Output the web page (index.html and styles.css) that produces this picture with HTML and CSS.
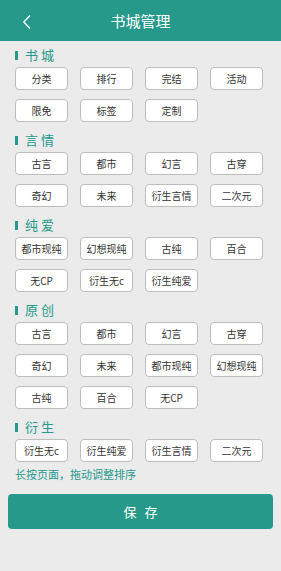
FILE: index.html
```html
<!DOCTYPE html>
<html lang="zh">
<head>
  <meta charset="UTF-8" />
  <title>书城管理</title>
  <link rel="stylesheet" href="styles.css">
</head>
<body>
  <div class="header">
    <span class="back">
      <svg width="10" height="16" viewBox="0 0 10 16"><path d="M8 1.5 L1.8 8 L8 14.5" fill="none" stroke="#fff" stroke-width="1.3"/></svg>
    </span>
    <h1>书城管理</h1>
  </div>
  <div class="container">
    <div class="section">
      <div class="section-title">书城</div>
      <div class="tags">
        <span class="tag">分类</span>
        <span class="tag">排行</span>
        <span class="tag">完结</span>
        <span class="tag">活动</span>
        <span class="tag">限免</span>
        <span class="tag">标签</span>
        <span class="tag">定制</span>
      </div>
    </div>
    <div class="section">
      <div class="section-title">言情</div>
      <div class="tags">
        <span class="tag">古言</span>
        <span class="tag">都市</span>
        <span class="tag">幻言</span>
        <span class="tag">古穿</span>
        <span class="tag">奇幻</span>
        <span class="tag">未来</span>
        <span class="tag">衍生言情</span>
        <span class="tag">二次元</span>
      </div>
    </div>
    <div class="section">
      <div class="section-title">纯爱</div>
      <div class="tags">
        <span class="tag">都市现纯</span>
        <span class="tag">幻想现纯</span>
        <span class="tag">古纯</span>
        <span class="tag">百合</span>
        <span class="tag">无CP</span>
        <span class="tag">衍生无c</span>
        <span class="tag">衍生纯爱</span>
      </div>
    </div>
    <div class="section">
      <div class="section-title">原创</div>
      <div class="tags">
        <span class="tag">古言</span>
        <span class="tag">都市</span>
        <span class="tag">幻言</span>
        <span class="tag">古穿</span>
        <span class="tag">奇幻</span>
        <span class="tag">未来</span>
        <span class="tag">都市现纯</span>
        <span class="tag">幻想现纯</span>
        <span class="tag">古纯</span>
        <span class="tag">百合</span>
        <span class="tag">无CP</span>
      </div>
    </div>
    <div class="section">
      <div class="section-title">衍生</div>
      <div class="tags">
        <span class="tag">衍生无c</span>
        <span class="tag">衍生纯爱</span>
        <span class="tag">衍生言情</span>
        <span class="tag">二次元</span>
      </div>
    </div>
    <div class="hint">长按页面，拖动调整排序</div>
  </div>
  <button class="save">保存</button>
</body>
</html>
```

FILE: styles.css
```css
body {
  font-family: "Noto Sans CJK SC", "Noto Sans", sans-serif;
  background: #ebebeb;
  margin: 0;
  padding: 0;
  color: #333;
}
.header {
  height: 41px;
  background: #26998b;
  display: flex;
  align-items: center;
  justify-content: center;
  position: relative;
}
.header h1 {
  margin: 0;
  font-size: 15px;
  font-weight: normal;
  color: #fff;
  letter-spacing: 0;
}
.back {
  position: absolute;
  left: 22px;
  top: 14px;
  display: flex;
}
.container {
  padding: 6px 16px 0 15px;
}
.section {
  margin-bottom: 10px;
}
.section-title {
  height: 16px;
  line-height: 16px;
  font-size: 13px;
  color: #26998b;
  letter-spacing: 3px;
  display: flex;
  align-items: center;
  margin-bottom: 4px;
}
.section-title::before {
  content: "";
  width: 3px;
  height: 9px;
  background: #26998b;
  margin-right: 7px;
}
.tags {
  display: grid;
  grid-template-columns: repeat(4, 53px);
  column-gap: 12px;
  row-gap: 9px;
}
.tag {
  height: 23px;
  box-sizing: border-box;
  border: 1px solid #bdbdbd;
  border-radius: 4px;
  background: #fff;
  font-size: 10px;
  display: flex;
  align-items: center;
  justify-content: center;
  white-space: nowrap;
}
.hint {
  margin-top: -5px;
  font-size: 11px;
  line-height: 14px;
  color: #26998b;
}
.save {
  display: block;
  width: 265px;
  height: 35px;
  margin: 13px 0 0 8px;
  border: none;
  border-radius: 4px;
  background: #26998b;
  color: #fff;
  font-family: "Noto Sans CJK SC", "Noto Sans", sans-serif;
  font-size: 13px;
  letter-spacing: 8px;
  text-indent: 8px;
}
```
